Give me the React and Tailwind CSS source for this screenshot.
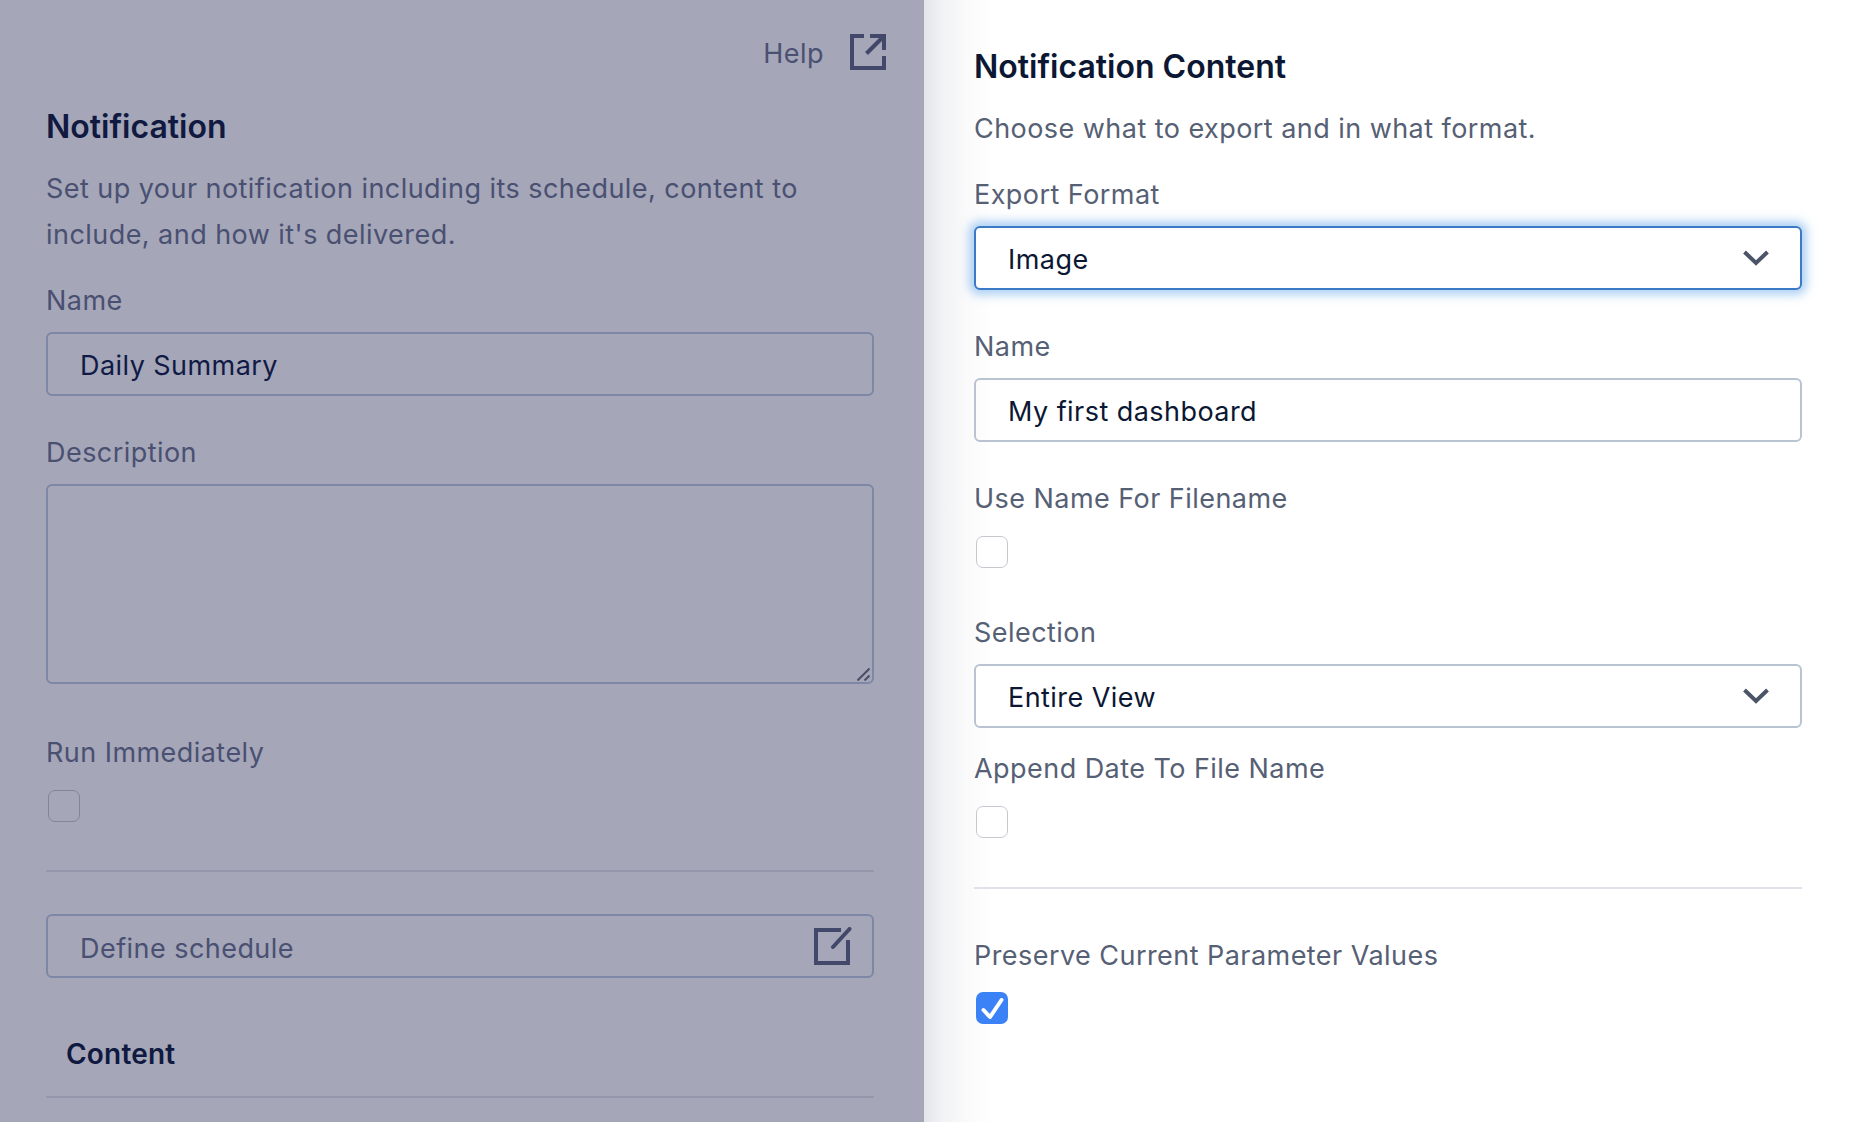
const font = { fontFamily: "Inter, sans-serif" };

function Label({ children, className = "" }) {
  return <div className={`text-[27px] leading-[32px] tracking-[0.45px] ${className}`}>{children}</div>;
}

function TextBox({ value, tone }) {
  const toneClass = tone === "dim" ? "border-[#7f87a6] text-[#101a45]" : "border-[#b9c4d3] text-[#0b1733]";
  return (
    <input
      readOnly
      value={value}
      className={`block w-full h-16 rounded-[6px] border-2 bg-transparent pl-[32px] pt-[2px] text-[27px] tracking-[0.45px] outline-none ${toneClass}`}
    />
  );
}

function Select({ value, focused, className = "" }) {
  const cls = focused
    ? "border-[#3b7ac6] shadow-[0_0_10px_5px_rgba(96,165,235,0.5)]"
    : "border-[#b9c4d3]";
  return (
    <div className={`flex items-center justify-between h-16 rounded-[6px] border-2 bg-white pl-[32px] pr-[31px] text-[27px] tracking-[0.45px] text-[#0b1733] ${cls} ${className}`}>
      <span className="pt-[5px]">{value}</span>
      <svg width="26" height="16" viewBox="0 0 26 16" fill="none" stroke="#4c5567" strokeWidth="4">
        <path d="M1.5 2 L13 13 L24.5 2" />
      </svg>
    </div>
  );
}

function Checkbox({ checked, dim, className = "" }) {
  if (checked) {
    return (
      <div className={`w-8 h-8 ml-[2px] rounded-[7px] bg-[#3b82f6] ${className}`}>
        <svg width="32" height="32" viewBox="0 0 32 32" fill="none" stroke="white" strokeWidth="4" strokeLinecap="round" strokeLinejoin="round">
          <path d="M7.5 18 L14 25 L25.5 8" />
        </svg>
      </div>
    );
  }
  return (
    <div className={`w-8 h-8 ml-[2px] rounded-[7px] border ${dim ? "border-[#82859a]" : "border-[#c6c9cf] bg-white"} ${className}`} />
  );
}

export default function App() {
  return (
    <div style={font} className="flex h-[1122px] w-[1850px] overflow-hidden bg-white">
      {/* dimmed main form */}
      <div className="w-[924px] h-full shrink-0 bg-[#a5a6b8] pl-[46px] pr-[50px] pt-[34px] text-[#4a5071]">
        <div className="flex items-center justify-end h-9 mr-[-12px]">
          <span className="text-[27px] tracking-[0.45px] pt-[4px] mr-[26px]">Help</span>
          <svg width="36" height="36" viewBox="0 0 36 36" fill="none" stroke="#414869" strokeWidth="4">
            <path d="M14 2 H2 V34 H34 V22" />
            <path d="M20 2 H34 V16" />
            <path d="M16.5 19.5 L32 4" />
          </svg>
        </div>

        <h1 className="mt-[37px] text-[32px] leading-[40px] font-semibold text-[#10193f]">Notification</h1>
        <p className="mt-[19px] text-[27px] leading-[46px] tracking-[0.45px]">
          Set up your notification including its schedule, content to
          <br />
          include, and how it's delivered.
        </p>

        <Label className="mt-[27px]">Name</Label>
        <div className="mt-[15px]"><TextBox value="Daily Summary" tone="dim" /></div>

        <Label className="mt-[41px]">Description</Label>
        <div className="relative mt-[15px]">
          <textarea readOnly className="block w-full h-[200px] resize-none rounded-[6px] border-2 border-[#7f87a6] bg-transparent outline-none" />
          <svg className="absolute right-[4px] bottom-[3px]" width="13" height="13" viewBox="0 0 13 13" fill="none" stroke="#4a4f66" strokeWidth="2">
            <path d="M0.5 12.5 L12.5 0.5" />
            <path d="M7.5 12.5 L12.5 7.5" />
          </svg>
        </div>

        <Label className="mt-[53px]">Run Immediately</Label>
        <Checkbox dim className="mt-[21px]" />

        <div className="mt-[48px] h-[2px] bg-[#9597ad]" />

        <div className="mt-[42px] flex items-center justify-between h-16 rounded-[6px] border-2 border-[#7f87a6] pl-[32px] pr-[20px] text-[27px] tracking-[0.45px]">
          <span className="pt-[6px]">Define schedule</span>
          <svg width="38" height="38" viewBox="0 0 38 38" fill="none" stroke="#414869" strokeWidth="4" strokeLinejoin="miter">
            <path d="M27 3 H2 V36 H34 V13" />
            <path d="M19 20 L35.5 2" strokeLinecap="round" />
          </svg>
        </div>

        <div className="mt-[60px] pl-[20px] text-[28px] leading-[32px] tracking-[0.2px] font-semibold text-[#10193f]">Content</div>
        <div className="mt-[26px] h-[2px] bg-[#9597ad]" />
      </div>

      {/* side panel */}
      <div className="flex-1 h-full pl-[50px] pr-[48px] pt-[47px] text-[#566074] bg-[linear-gradient(90deg,#e4e5e9_0,#f1f2f4_18px,#fafafb_42px,#ffffff_70px)]">
        <h2 className="text-[32px] leading-[40px] font-semibold text-[#0b1733]">Notification Content</h2>
        <p className="mt-[19px] text-[27px] leading-[46px] tracking-[0.45px]">Choose what to export and in what format.</p>

        <Label className="mt-[27px]">Export Format</Label>
        <Select focused className="mt-[15px]" value="Image" />

        <Label className="mt-[41px]">Name</Label>
        <div className="mt-[15px]"><TextBox value="My first dashboard" /></div>

        <Label className="mt-[41px]">Use Name For Filename</Label>
        <Checkbox className="mt-[21px]" />

        <Label className="mt-[49px]">Selection</Label>
        <Select className="mt-[15px]" value="Entire View" />

        <Label className="mt-[25px]">Append Date To File Name</Label>
        <Checkbox className="mt-[21px]" />

        <div className="mt-[49px] h-[2px] bg-[#dfe3e9]" />

        <Label className="mt-[51px]">Preserve Current Parameter Values</Label>
        <Checkbox checked className="mt-[20px]" />
      </div>
    </div>
  );
}
